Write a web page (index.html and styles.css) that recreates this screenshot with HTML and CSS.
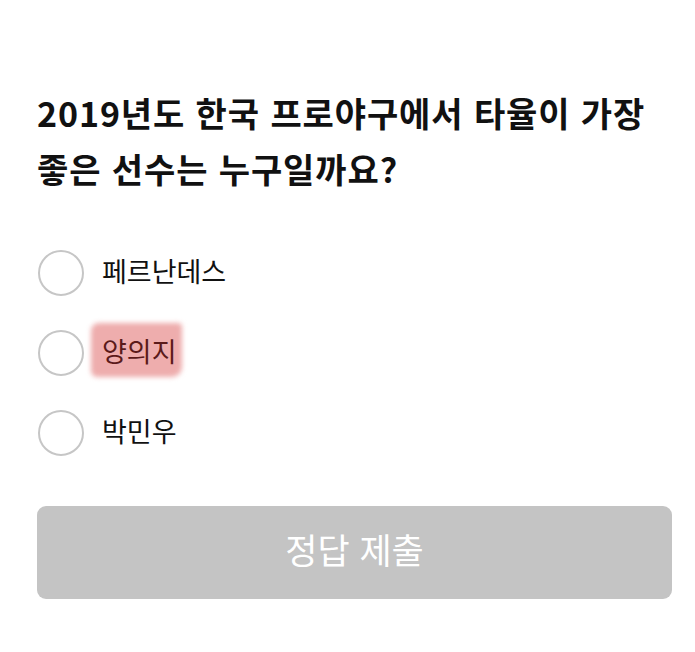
FILE: index.html
```html
<!DOCTYPE html>
<html lang="ko">
<head>
    <meta charset="UTF-8">
    <meta name="viewport" content="width=device-width, initial-scale=1.0">
    <title>퀴즈</title>
    <link rel="stylesheet" href="styles.css">
</head>
<body>
    <div class="quiz">
        <h1 class="question">2019년도 한국 프로야구에서 타율이 가장 좋은 선수는 누구일까요?</h1>

        <div class="options">
            <label class="option">
                <span class="radio"></span>
                <span class="option-text">페르난데스</span>
            </label>
            <label class="option">
                <span class="radio"></span>
                <span class="option-text highlight">양의지</span>
            </label>
            <label class="option">
                <span class="radio"></span>
                <span class="option-text">박민우</span>
            </label>
        </div>

        <button class="submit" disabled>정답 제출</button>
    </div>
</body>
</html>
```

FILE: styles.css
```css
body {
    margin: 0;
    background: #ffffff;
    font-family: "Noto Sans CJK KR", "Noto Sans", sans-serif;
    color: #111;
}
.quiz {
    padding: 85px 23px 0 37px;
}
.question {
    margin: 0;
    max-width: 620px;
    font-size: 34px;
    font-weight: 700;
    line-height: 56px;
    letter-spacing: 0.9px;
}
.options {
    display: flex;
    flex-direction: column;
    gap: 34px;
    margin-top: 53px;
}
.option {
    display: flex;
    align-items: center;
    gap: 18px;
    height: 46px;
}
.radio {
    width: 42px;
    height: 42px;
    border: 2px solid #c6c6c6;
    border-radius: 50%;
    flex-shrink: 0;
    margin-left: 1px;
}
.option-text {
    padding-bottom: 5px;
    font-size: 27px;
    font-weight: 400;
}
.highlight {
    position: relative;
    color: #5b1a1a;
}
.highlight::before {
    content: "";
    position: absolute;
    left: -11px;
    right: -5px;
    top: -8px;
    bottom: -2px;
    background: #eeadad;
    border-radius: 8px 4px 10px 6px;
    filter: blur(2.5px);
    z-index: -1;
}
.submit {
    display: block;
    width: 100%;
    height: 93px;
    margin-top: 50px;
    padding: 0 0 8px;
    border: none;
    border-radius: 9px;
    background: #c4c4c4;
    color: #ffffff;
    font-family: inherit;
    font-size: 35px;
    font-weight: 400;
}
```
